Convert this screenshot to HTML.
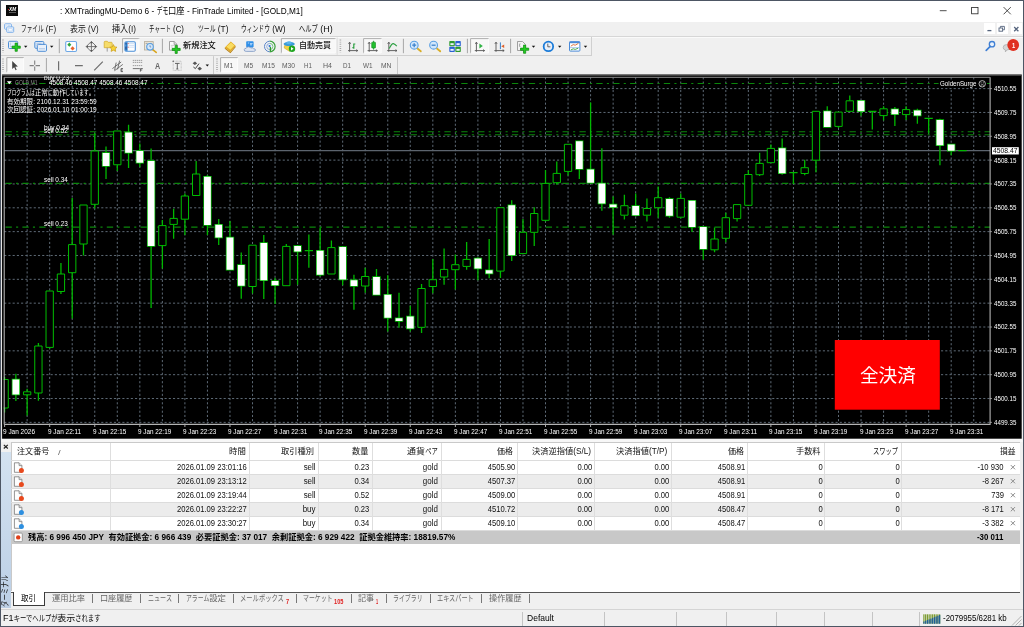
<!DOCTYPE html>
<html lang="ja"><head><meta charset="utf-8"><title>MT4</title>
<style>
html,body{margin:0;padding:0;background:#fff;overflow:hidden}
#w{position:relative;width:1024px;height:627px;overflow:hidden;background:#f0f0f0;font-family:'Liberation Sans','Noto Sans CJK JP',sans-serif;will-change:transform;}
#w div,#w span,#w svg{position:absolute;display:block}

#w span{white-space:pre;transform-origin:0 50%;}
#w span i{display:inline-block;font-style:normal;transform-origin:0 50%;}
</style></head>
<body><div id="w">
<div style="left:0px;top:0px;width:1024px;height:22px;background:#fff;"></div>
<div style="left:6px;top:5px;width:11.5px;height:11px;background:#0b0b0b;"></div>
<div style="left:8.6px;top:12.3px;width:7px;height:0.7px;background:#5a5a5a;"></div>
<div style="left:7.8px;top:9.3px;width:1px;height:1.2px;background:#d02020;"></div>
<svg style="left:930px;top:0" width="94" height="22" viewBox="0 0 94 22"><g stroke="#222" stroke-width="0.8" fill="none"><path d="M9.8 10.7H16.6"/><rect x="41.6" y="7.4" width="6.4" height="6.4"/><path d="M73.6 7.1L80.8 14.3M80.8 7.1L73.6 14.3"/></g></svg>
<div style="left:0px;top:22px;width:1024px;height:14.5px;background:#f0f0f0;"></div>
<svg style="left:4px;top:23px" width="12" height="12" viewBox="0 0 12 12"><rect x="0.6" y="0.8" width="6.8" height="5.4" rx="0.8" fill="#f4f8fd" stroke="#7eb0ea" stroke-width="1"/><path d="M1.6 2.6h1M1.6 4h1M3.6 2.4h2.6" stroke="#a9c8ee" stroke-width="0.7"/><rect x="2.7" y="3.9" width="7" height="5.4" rx="0.8" fill="#f4f8fd" stroke="#7eb0ea" stroke-width="1"/><rect x="4.2" y="5.8" width="4" height="2.2" fill="#fff" stroke="#a9c8ee" stroke-width="0.6"/></svg>
<div style="left:984px;top:23.4px;width:11px;height:10.4px;background:#fff;"></div>
<div style="left:996.5px;top:23.4px;width:11px;height:10.4px;background:#fff;"></div>
<div style="left:1010.8px;top:23.4px;width:11px;height:10.4px;background:#fff;"></div>
<svg style="left:984px;top:23px" width="38" height="11" viewBox="0 0 38 11"><g stroke="#55647d" fill="none"><path d="M3.4 7.6H7.4" stroke-width="1.3"/><rect x="15" y="5" width="3.6" height="3.2" stroke-width="0.9"/><path d="M16.4 4.8V3.4H20.4V6.8H19" stroke-width="0.9"/><path d="M30.2 4L34.4 8.2M34.4 4L30.2 8.2" stroke-width="1.3"/></g></svg>
<div style="left:0px;top:36.2px;width:1024px;height:0.8px;background:#d6d6d6;"></div>
<div style="left:0px;top:37px;width:1024px;height:0.8px;background:#fafafa;"></div>
<div style="left:591px;top:37px;width:0.8px;height:18.5px;background:#d0d0d0;"></div>
<div style="left:0px;top:55px;width:591.5px;height:0.8px;background:#d0d0d0;"></div>
<div style="left:397.3px;top:56.5px;width:0.8px;height:17.5px;background:#c8c8c8;"></div>
<svg style="left:0;top:36px" width="1024" height="40" viewBox="0 36 1024 40"><path d="M3 39.6V52.6" stroke="#a8a8a8" stroke-width="1.6" stroke-dasharray="0.9 1.2"/><rect x="8.5" y="41.3" width="9.2" height="7.2" rx="1" fill="#e3eefb" stroke="#4f8fd6" stroke-width="1"/><path d="M10 43.2h1M10 44.8h1M10 46.4h3" stroke="#9db9dc" stroke-width="0.7"/><path d="M15.1 43.1h2.2v2.9999999999999996h2.9999999999999996v2.2h-2.9999999999999996v2.9999999999999996h-2.2v-2.9999999999999996h-2.9999999999999996v-2.2h2.9999999999999996z" fill="#22cc22" stroke="#0c8a0c" stroke-width="0.7" stroke-linejoin="round"/><path d="M24 45.8h3.4l-1.7 2z" fill="#111"/><rect x="34.8" y="41.5" width="9" height="6.8" rx="1" fill="#dce9f8" stroke="#4f8fd6" stroke-width="1"/><rect x="37.3" y="44.4" width="9.2" height="6.9" rx="1" fill="#e8f0fa" stroke="#4f8fd6" stroke-width="1"/><path d="M36.4 43.4h5M36.4 45h2" stroke="#9db9dc" stroke-width="0.7"/><path d="M39 48.8h6" stroke="#9db9dc" stroke-width="0.8"/><path d="M50 45.8h3.4l-1.7 2z" fill="#111"/><path d="M59.3 38.8V53.2" stroke="#a6a6a6" stroke-width="1"/><rect x="65.7" y="41.5" width="10.8" height="10" rx="1.2" fill="#fdfeff" stroke="#6ea8e6" stroke-width="1.1"/><path d="M69.3 42.6l2 2.1-2 2.1-2-2.1z" fill="#2da43a"/><path d="M72.6 46.2l2.1 2.2-2.1 2.2-2.1-2.2z" fill="#e8622a"/><g stroke="#6a6a6a" fill="none" stroke-width="0.9"><path d="M91.4 41.4l5.2 5.2-5.2 5.2-5.2-5.2z"/><path d="M91.4 42.6v8M87.4 46.6h8"/></g><path d="M91.4 41.2l1.3 2h-2.6zM91.4 52l1.3-2h-2.6zM86 46.6l2-1.3v2.6zM96.8 46.6l-2-1.3v2.6z" fill="#555"/><path d="M104.2 42.2q0-0.9 0.9-0.9h2.2l0.9 1h3.2q0.8 0 0.8 0.8v4.6h-8z" fill="#f6dc6a" stroke="#d0a626" stroke-width="0.7"/><path d="M107.2 47.8v3.8" stroke="#777" stroke-width="0.7"/><path d="M113.4 44.6l1.1 2.3 2.5 0.3-1.8 1.7 0.5 2.5-2.3-1.2-2.3 1.2 0.5-2.5-1.8-1.7 2.5-0.3z" fill="#f7d43a" stroke="#c99a16" stroke-width="0.7" stroke-linejoin="round"/><rect x="122.2" y="38.2" width="17.200000000000003" height="15.0" fill="#f8f8f8"/><path d="M122.60000000000001 53.2V38.6H139.4" stroke="#9a9a9a" stroke-width="0.8" fill="none"/><path d="M122.60000000000001 52.900000000000006H139.0V38.6" stroke="#fdfdfd" stroke-width="0.8" fill="none"/><rect x="124.9" y="41.7" width="10.4" height="9.6" rx="1.2" fill="#fff" stroke="#4a8fd8" stroke-width="1.1"/><rect x="125.3" y="42.2" width="2.3" height="8.6" fill="#2f7fd0"/><path d="M128.4 43.6h6M128.4 45.4h6M128.4 47.2h6" stroke="#bcd3f0" stroke-width="0.7"/><path d="M127.7 43.6h0.9M127.7 47.2h0.9" stroke="#e03030" stroke-width="0.9"/><path d="M125.9 43.2v1.2M125.9 46.6v3" stroke="#13345e" stroke-width="0.8"/><rect x="144.4" y="41.6" width="8.8" height="8.4" fill="#ece6da" stroke="#b4aa98" stroke-width="0.8"/><path d="M145.6 43.4h2M150 43.4h2" stroke="#888" stroke-width="0.7"/><path d="M152.4 49.4l3.8 3" stroke="#d8a620" stroke-width="1.6" stroke-linecap="round"/><circle cx="150" cy="46.8" r="3.3" fill="#d6e8fa" stroke="#5a9ee0" stroke-width="1.1"/><path d="M150 45.2v1.8h1.2" stroke="#5a7fae" stroke-width="0.7" fill="none"/><path d="M162.4 38.8V53.2" stroke="#a6a6a6" stroke-width="1"/><path d="M169.5 41.5h4.6l2.9 2.9v5.8h-7.5z" fill="#fbfbfb" stroke="#8a8a8a" stroke-width="0.8"/><path d="M174.1 41.5v2.9h2.9" fill="#ddd" stroke="#8a8a8a" stroke-width="0.7"/><path d="M170.8 45.4h4M170.8 47h2" stroke="#bbb" stroke-width="0.7"/><path d="M175.14999999999998 45.4h2.1v2.95h2.95v2.1h-2.95v2.95h-2.1v-2.95h-2.95v-2.1h2.95z" fill="#22cc22" stroke="#0c8a0c" stroke-width="0.7" stroke-linejoin="round"/><path d="M224.8 47.6l6-6 4.8 4.2-5.2 6.2z" fill="#e4ac22"/><path d="M226.4 46.8l4.6-4.4 3.4 3-4 4.4z" fill="#f8dc62"/><path d="M224.8 47.6l5.6 4.4 5.2-6.2v1.4l-5.2 6-5.6-4.4z" fill="#b9831a"/><rect x="246.2" y="41.2" width="7.4" height="6.2" rx="0.8" fill="#2f8fe8"/><path d="M247.8 43h1.4M250 43.6h2.6M250 44.8h2" stroke="#e8f2ff" stroke-width="0.7"/><path d="M246.2 51.4q-2.2 0-2-1.7 0.2-1.5 2-1.4 0.6-1.6 2.4-1.5 1.6 0.1 2.2 1.3 1.6-0.9 2.6 0.5 2.2 0.1 2.1 1.5-0.1 1.3-2 1.3z" fill="#dfe6f2" stroke="#6f8cbc" stroke-width="0.7"/><circle cx="269.8" cy="46.5" r="5.3" fill="#eef1f5"/><path d="M269.8 41.2a5.3 5.3 0 0 0 0 10.6" fill="none" stroke="#5b86c9" stroke-width="1"/><path d="M269.8 41.2a5.3 5.3 0 0 1 0 10.6" fill="none" stroke="#39a039" stroke-width="1.2"/><path d="M269.8 43.4a3.1 3.1 0 0 0 0 6.2" fill="none" stroke="#7b9bd0" stroke-width="0.8"/><path d="M269.8 43.4a3.1 3.1 0 0 1 0 6.2" fill="none" stroke="#5fb65f" stroke-width="0.8"/><circle cx="269.6" cy="46" r="1.1" fill="#2f6fd0"/><path d="M270.4 47v4.4" stroke="#2c9a2c" stroke-width="1.3"/><rect x="281" y="38.2" width="54.60000000000002" height="15.0" fill="#f8f8f8"/><path d="M281.4 53.2V38.6H335.6" stroke="#9a9a9a" stroke-width="0.8" fill="none"/><path d="M281.4 52.900000000000006H335.20000000000005V38.6" stroke="#fdfdfd" stroke-width="0.8" fill="none"/><path d="M284.4 45.6h7.6l1.2 3-3.6 2.8-5.4-3.4z" fill="#f2d244" stroke="#c9a01c" stroke-width="0.5"/><ellipse cx="289.2" cy="43.9" rx="5.6" ry="2.1" fill="#3a9ad9"/><ellipse cx="289" cy="42.8" rx="2.8" ry="1.5" fill="#5ab4ea"/><circle cx="292" cy="48.8" r="3.2" fill="#1fa51f"/><path d="M291 47.1l2.6 1.7-2.6 1.7z" fill="#fff"/><path d="M337.2 37.4V55" stroke="#dadada" stroke-width="0.8"/><path d="M340.4 39.6V52.6" stroke="#a8a8a8" stroke-width="1.6" stroke-dasharray="0.9 1.2"/><path d="M349.6 42.4V51.8M348 50.6H357.6M348.5 43.8l1.1-1.6 1.1 1.6M356.3 49.7l1.5 0.9-1.5 0.9" stroke="#555" stroke-width="0.9" fill="none"/><path d="M353.8 43.4v5.4M353.8 47.6h-1.4M353.8 44h1.5" stroke="#2ea043" stroke-width="1.2"/><rect x="363.2" y="38.2" width="18.400000000000034" height="15.0" fill="#f8f8f8"/><path d="M363.59999999999997 53.2V38.6H381.6" stroke="#9a9a9a" stroke-width="0.8" fill="none"/><path d="M363.59999999999997 52.900000000000006H381.20000000000005V38.6" stroke="#fdfdfd" stroke-width="0.8" fill="none"/><path d="M369.20000000000005 42.4V51.8M367.6 50.6H377.20000000000005M368.1 43.8l1.1-1.6 1.1 1.6M375.90000000000003 49.7l1.5 0.9-1.5 0.9" stroke="#555" stroke-width="0.9" fill="none"/><path d="M373.6 40.8v8.8" stroke="#1e9a2e" stroke-width="0.9"/><rect x="371.7" y="42.2" width="3.8" height="5.8" rx="0.6" fill="#22c02e" stroke="#168a22" stroke-width="0.6"/><path d="M388.8 42.4V51.8M387.2 50.6H396.8M387.7 43.8l1.1-1.6 1.1 1.6M395.5 49.7l1.5 0.9-1.5 0.9" stroke="#555" stroke-width="0.9" fill="none"/><path d="M389.2 48.6q2.4-5.2 4.2-5 1.6 0.4 3.4 2.6" stroke="#2ea043" stroke-width="1.1" fill="none"/><path d="M403.4 38.8V53.2" stroke="#a6a6a6" stroke-width="1"/><path d="M417.2 48.2l3.6 3.1" stroke="#d9ae2a" stroke-width="1.8" stroke-linecap="round"/><circle cx="414.2" cy="45.2" r="3.9" fill="#d2e7fb" stroke="#5a9fe2" stroke-width="1.1"/><path d="M412.2 45.2h4M414.2 43.2v4" stroke="#3d82cc" stroke-width="1.3"/><path d="M436.6 48.2l3.6 3.1" stroke="#d9ae2a" stroke-width="1.8" stroke-linecap="round"/><circle cx="433.6" cy="45.2" r="3.9" fill="#d2e7fb" stroke="#5a9fe2" stroke-width="1.1"/><path d="M431.6 45.2h4" stroke="#3d82cc" stroke-width="1.3"/><rect x="449.3" y="41.1" width="5.5" height="5.2" rx="0.7" fill="#2e9a2e"/><rect x="450.40000000000003" y="43.2" width="3.3" height="1.9" fill="#eef3ff"/><rect x="455.3" y="41.1" width="5.5" height="5.2" rx="0.7" fill="#2a62d2"/><rect x="456.40000000000003" y="43.2" width="3.3" height="1.9" fill="#eef3ff"/><rect x="449.3" y="46.8" width="5.5" height="5.2" rx="0.7" fill="#2a62d2"/><rect x="450.40000000000003" y="48.9" width="3.3" height="1.9" fill="#eef3ff"/><rect x="455.3" y="46.8" width="5.5" height="5.2" rx="0.7" fill="#2e9a2e"/><rect x="456.40000000000003" y="48.9" width="3.3" height="1.9" fill="#eef3ff"/><path d="M467.4 38.8V53.2" stroke="#a6a6a6" stroke-width="1"/><rect x="470.2" y="38.2" width="18.600000000000023" height="15.0" fill="#f8f8f8"/><path d="M470.59999999999997 53.2V38.6H488.8" stroke="#9a9a9a" stroke-width="0.8" fill="none"/><path d="M470.59999999999997 52.900000000000006H488.40000000000003V38.6" stroke="#fdfdfd" stroke-width="0.8" fill="none"/><path d="M476.40000000000003 42.4V51.8M474.8 50.6H484.40000000000003M475.3 43.8l1.1-1.6 1.1 1.6M483.1 49.7l1.5 0.9-1.5 0.9" stroke="#555" stroke-width="0.9" fill="none"/><path d="M479.4 43.6l3.4 2.4-3.4 2.4z" fill="#2fb344"/><path d="M496.0 42.4V51.8M494.4 50.6H504.0M494.9 43.8l1.1-1.6 1.1 1.6M502.7 49.7l1.5 0.9-1.5 0.9" stroke="#555" stroke-width="0.9" fill="none"/><path d="M500.4 42.4v6.8" stroke="#3a7fc8" stroke-width="1"/><path d="M504.2 44.4v3.6l-3-1.8z" fill="#e0602a"/><path d="M510.6 38.8V53.2" stroke="#a6a6a6" stroke-width="1"/><path d="M517.5 41.5h5l3 3v6h-8z" fill="#f4f4f4" stroke="#8a8a8a" stroke-width="0.8"/><path d="M520 43.4q-1 1.8 0 3.6" stroke="#777" stroke-width="0.7" fill="none"/><path d="M523.5 45.1h2.2v2.9999999999999996h2.9999999999999996v2.2h-2.9999999999999996v2.9999999999999996h-2.2v-2.9999999999999996h-2.9999999999999996v-2.2h2.9999999999999996z" fill="#22cc22" stroke="#0c8a0c" stroke-width="0.7" stroke-linejoin="round"/><path d="M531.8 45.8h3.4l-1.7 2z" fill="#111"/><circle cx="548.4" cy="46.4" r="4.75" fill="#e8eff9" stroke="#1b7bd8" stroke-width="1.8"/><path d="M547.8 43.6v3.2h2.6" stroke="#444" stroke-width="0.8" fill="none"/><path d="M558 45.8h3.4l-1.7 2z" fill="#111"/><rect x="569.5" y="41.7" width="10.4" height="9.4" rx="0.8" fill="#fff" stroke="#4a8ad8" stroke-width="1"/><path d="M569.5 42.4h10.4" stroke="#4a8ad8" stroke-width="1.6"/><path d="M570 47.6h9.4" stroke="#8fb4e6" stroke-width="0.7"/><path d="M570.8 46.2l2.4-1.6 2 0.6 3.2-1.8" stroke="#d8682e" stroke-width="0.9" fill="none"/><path d="M570.8 50l2.4-1.2 2 0.6 3-1.2" stroke="#3aa040" stroke-width="0.9" fill="none"/><path d="M583.8 45.8h3.4l-1.7 2z" fill="#111"/><circle cx="992" cy="44.2" r="2.7" fill="#eaf2fc" stroke="#3f7fd4" stroke-width="1.3"/><path d="M990.2 46.4l-4 4" stroke="#3f7fd4" stroke-width="1.7" stroke-linecap="round"/><path d="M1003.2 47.4q0-2.8 3.4-2.8 3.6 0 3.6 2.8 0 2.6-3.4 2.7l-1.4 1.8v-1.9q-2.2-0.4-2.2-2.6z" fill="#d6d6d6" stroke="#a8a8a8" stroke-width="0.7"/><circle cx="1013.2" cy="45" r="5.9" fill="#e03020"/><path d="M3 58.6V71.6" stroke="#a8a8a8" stroke-width="1.6" stroke-dasharray="0.9 1.2"/><rect x="6.4" y="57.2" width="17.6" height="15.0" fill="#f8f8f8"/><path d="M6.800000000000001 72.2V57.6H24" stroke="#9a9a9a" stroke-width="0.8" fill="none"/><path d="M6.800000000000001 71.9H23.6V57.6" stroke="#fdfdfd" stroke-width="0.8" fill="none"/><path d="M12.2 60.9v8.2l2-1.9 1.4 3 1.1-0.5-1.4-2.9 2.6-0.2z" fill="#444"/><path d="M29.6 65.6h4.2M35.6 65.6h4.4M34.7 60.4v4.3M34.7 66.5v4.3" stroke="#808080" stroke-width="1.1"/><path d="M46.4 58V71.8" stroke="#a6a6a6" stroke-width="1"/><path d="M58.6 61.2v9.2M75 65.6h7.8M94.2 70.4l8.6-8.8" stroke="#6e6e6e" stroke-width="1.2"/><path d="M112.4 68.6l8.8-6.6M114.4 70.8l8.4-6.4M116.2 62.6l-1.6 7.6M119.6 60.6l-2 8.8" stroke="#666" stroke-width="0.9"/><path d="M121 68.6v3h2M121 68.6h2M121 70h1.6" stroke="#444" stroke-width="0.8" fill="none"/><path d="M132.8 68.6h7" stroke="#666" stroke-width="0.9"/><path d="M132.8 60.4h10M132.8 62.4h10M132.8 65.6h10" stroke="#888" stroke-width="0.8" stroke-dasharray="1.4 0.6"/><path d="M140.4 71.6v-3h2.4M140.4 70h1.8" stroke="#444" stroke-width="0.8" fill="none"/><rect x="173.2" y="61.2" width="8" height="9.2" fill="none" stroke="#999" stroke-width="0.6" stroke-dasharray="0.8 0.6"/><circle cx="173.2" cy="61.2" r="0.8" fill="#666"/><path d="M175 63.4h4.6M177.3 63.4v5.6M176.3 69h2" stroke="#555" stroke-width="0.9"/><path d="M192.6 63.2l2.4-1.8 2.2 2-2.4 1.6zM197.4 68.6l2.4-1.8 2.2 2-2.4 1.6z" fill="#555"/><path d="M193.4 67l2 1.6 3.6-5" stroke="#444" stroke-width="1" fill="none"/><path d="M205.6 64.6h3.4l-1.7 2z" fill="#111"/><path d="M213.5 56.2V74" stroke="#c4c4c4" stroke-width="0.9"/><path d="M217 58.6V71.6" stroke="#a8a8a8" stroke-width="1.6" stroke-dasharray="0.9 1.2"/><rect x="220.2" y="57.2" width="17.80000000000001" height="15.0" fill="#f8f8f8"/><path d="M220.6 72.2V57.6H238" stroke="#9a9a9a" stroke-width="0.8" fill="none"/><path d="M220.6 71.9H237.6V57.6" stroke="#fdfdfd" stroke-width="0.8" fill="none"/></svg>
<svg style="left:0;top:74px" width="1024" height="366" viewBox="0 74 1024 366"><rect x="2.05" y="74.6" width="1019.6500000000001" height="364.1" fill="#000"/><rect x="2.05" y="74.6" width="1019.6500000000001" height="1.2" fill="#505050"/><path d="M27.14 77.3V424.4M49.68 77.3V424.4M72.21 77.3V424.4M94.75 77.3V424.4M117.29 77.3V424.4M139.83 77.3V424.4M162.37 77.3V424.4M184.90 77.3V424.4M207.44 77.3V424.4M229.98 77.3V424.4M252.52 77.3V424.4M275.06 77.3V424.4M297.59 77.3V424.4M320.13 77.3V424.4M342.67 77.3V424.4M365.21 77.3V424.4M387.75 77.3V424.4M410.28 77.3V424.4M432.82 77.3V424.4M455.36 77.3V424.4M477.90 77.3V424.4M500.44 77.3V424.4M522.97 77.3V424.4M545.51 77.3V424.4M568.05 77.3V424.4M590.59 77.3V424.4M613.13 77.3V424.4M635.66 77.3V424.4M658.20 77.3V424.4M680.74 77.3V424.4M703.28 77.3V424.4M725.82 77.3V424.4M748.35 77.3V424.4M770.89 77.3V424.4M793.43 77.3V424.4M815.97 77.3V424.4M838.51 77.3V424.4M861.04 77.3V424.4M883.58 77.3V424.4M906.12 77.3V424.4M928.66 77.3V424.4M951.20 77.3V424.4M973.73 77.3V424.4M4.2 88.60H990.1M4.2 112.44H990.1M4.2 136.28H990.1M4.2 160.12H990.1M4.2 183.96H990.1M4.2 207.80H990.1M4.2 231.64H990.1M4.2 255.48H990.1M4.2 279.32H990.1M4.2 303.16H990.1M4.2 327.00H990.1M4.2 350.84H990.1M4.2 374.68H990.1M4.2 398.52H990.1M4.2 422.36H990.1" stroke="#5e6a76" stroke-width="1" stroke-dasharray="2.11 2.11" fill="none"/><path d="M4.2 83.53H990.1M4.2 131.81H990.1M4.2 134.79H990.1M4.2 183.36H990.1M4.2 227.17H990.1" stroke="#0b860b" stroke-width="1.1" stroke-dasharray="6.33 4.22 2.11 4.22" stroke-dashoffset="15.57" fill="none"/><path d="M4.2 150.58H990.1" stroke="#5c646e" stroke-width="1.2" fill="none"/><path d="M4.60 377.0V379.5M4.60 408.0V412.5M15.87 373.75V379.5M15.87 394.5V401.0M27.14 388.75V391.8M27.14 394.8V415.5M38.41 343.0V346.0M38.41 393.0V400.75M49.68 347.4V348.4M60.95 263.0V274.0M60.95 291.5V294.0M72.21 198.0V244.6M72.21 272.7V318.5M83.48 244.0V255.6M94.75 133.0V151.0M94.75 204.3V208.5M106.02 146.5V153.0M106.02 166.0V179.0M117.29 164.75V171.0M128.56 124.75V132.5M128.56 152.75V168.0M139.83 143.5V151.0M139.83 162.75V167.0M151.10 148.5V161.0M151.10 245.9V308.0M162.37 220.0V225.6M162.37 245.6V268.4M173.63 208.8V218.4M173.63 224.4V238.8M184.90 193.5V196.0M184.90 219.2V235.0M196.17 161.0V174.0M196.17 195.5V196.0M207.44 175.0V176.75M207.44 225.0V235.0M218.71 218.9V224.7M218.71 237.6V245.0M229.98 220.9V237.6M241.25 252.6V264.9M241.25 285.8V298.7M252.52 286.5V293.6M263.79 235.1V243.1M263.79 280.2V299.0M275.06 277.7V281.0M275.06 285.2V304.0M286.33 243.9V246.4M297.59 245.0V245.9M297.59 251.4V284.7M308.86 234.6V250.7M308.86 250.7V267.7M304.71 250.7H313.01M320.13 227.6V250.7M320.13 274.7V276.5M331.40 240.6V247.6M342.67 246.4V247.1M342.67 279.5V285.2M353.94 274.7V280.2M353.94 286.0V309.8M365.21 267.7V276.5M365.21 286.0V292.8M376.48 269.0V277.0M387.75 275.2V294.8M387.75 317.8V331.6M399.02 292.8V318.3M399.02 321.1V327.8M410.28 305.8V316.6M410.28 328.6V331.6M421.55 284.0V288.5M421.55 327.3V332.9M432.82 258.9V279.7M432.82 286.5V293.3M444.09 248.4V269.4M444.09 277.0V284.7M455.36 254.4V264.7M455.36 269.7V289.5M466.63 242.1V259.4M466.63 266.4V269.7M477.90 257.2V258.4M477.90 268.4V280.2M489.17 238.9V270.2M489.17 273.5V278.2M500.44 271.1V278.0M511.71 200.2V205.2M511.71 255.3V260.9M522.97 219.0V232.3M534.24 207.2V213.5M534.24 232.3V246.1M545.51 170.1V183.4M545.51 220.3V221.5M556.78 161.4V173.4M556.78 182.7V184.7M568.05 171.4V175.6M579.32 168.9V178.9M590.59 102.6V169.4M601.86 148.3V183.4M601.86 203.5V210.7M613.13 196.4V204.5M613.13 207.2V234.8M624.39 194.7V205.7M624.39 215.2V219.5M635.66 193.4V206.0M635.66 215.2V216.5M646.93 198.4V208.5M646.93 215.2V221.5M658.20 186.4V197.7M658.20 207.7V217.7M669.47 197.2V198.9M669.47 215.7V217.7M680.74 193.4V198.4M680.74 217.2V218.5M692.01 227.0V232.0M703.28 249.1V259.8M714.55 227.6V239.0M714.55 249.8V252.3M725.82 212.7V217.7M725.82 238.3V242.3M737.09 218.6V221.6M748.35 170.2V174.5M759.62 152.7V163.4M759.62 174.7V176.0M770.89 144.6V148.4M782.16 138.4V148.2M782.16 173.2V174.7M793.43 172.7V184.0M789.28 172.7H797.58M804.70 159.7V167.7M804.70 173.5V175.2M815.97 160.2V172.2M827.24 106.3V111.3M838.51 126.4V128.1M849.77 95.5V100.8M861.04 100.0V100.8M861.04 111.3V115.8M872.31 111.3V129.6M868.16 111.3H876.46M883.58 106.3V108.8M883.58 115.6V120.6M894.85 107.0V109.3M894.85 114.3V125.9M906.12 106.3V109.6M906.12 114.6V120.1M917.39 108.8V110.6M917.39 115.6V123.8M928.66 118.3V133.4M924.51 118.3H932.81M939.93 118.8V120.1M939.93 145.2V165.2M951.20 150.7V155.2M958.32 150.6H966.62" stroke="#00b800" stroke-width="1.3" fill="none"/><path d="M0.95 379.50H8.25V408.00H0.95ZM23.49 391.80H30.79V394.80H23.49ZM34.76 346.00H42.06V393.00H34.76ZM46.03 291.00H53.33V347.40H46.03ZM57.30 274.00H64.59V291.50H57.30ZM68.56 244.60H75.86V272.70H68.56ZM79.83 205.00H87.13V244.00H79.83ZM91.10 151.00H98.40V204.30H91.10ZM113.64 131.00H120.94V164.75H113.64ZM158.72 225.60H166.02V245.60H158.72ZM169.98 218.40H177.28V224.40H169.98ZM181.25 196.00H188.55V219.20H181.25ZM192.52 174.00H199.82V195.50H192.52ZM248.87 245.20H256.17V286.50H248.87ZM282.68 246.40H289.98V285.70H282.68ZM327.75 247.60H335.05V274.00H327.75ZM361.56 276.50H368.86V286.00H361.56ZM417.90 288.50H425.20V327.30H417.90ZM429.17 279.70H436.47V286.50H429.17ZM440.44 269.40H447.74V277.00H440.44ZM451.71 264.70H459.01V269.70H451.71ZM462.98 259.40H470.28V266.40H462.98ZM496.79 207.70H504.09V271.10H496.79ZM519.32 232.30H526.62V253.60H519.32ZM530.59 213.50H537.89V232.30H530.59ZM541.86 183.40H549.16V220.30H541.86ZM553.13 173.40H560.43V182.70H553.13ZM564.40 144.30H571.70V171.40H564.40ZM620.75 205.70H628.04V215.20H620.75ZM643.28 208.50H650.58V215.20H643.28ZM654.55 197.70H661.85V207.70H654.55ZM677.09 198.40H684.39V217.20H677.09ZM710.90 239.00H718.20V249.80H710.90ZM722.17 217.70H729.47V238.30H722.17ZM733.44 204.60H740.74V218.60H733.44ZM744.70 174.50H752.00V205.30H744.70ZM755.97 163.40H763.27V174.70H755.97ZM767.24 148.40H774.54V162.70H767.24ZM801.05 167.70H808.35V173.50H801.05ZM812.32 111.30H819.62V160.20H812.32ZM834.86 112.10H842.16V126.40H834.86ZM846.12 100.80H853.42V111.30H846.12ZM879.93 108.80H887.23V115.60H879.93ZM902.47 109.60H909.77V114.60H902.47Z" stroke="#00be00" stroke-width="1" fill="#000"/><path d="M12.47 379.50H19.27V394.50H12.47ZM102.62 153.00H109.42V166.00H102.62ZM125.16 132.50H131.96V152.75H125.16ZM136.43 151.00H143.23V162.75H136.43ZM147.70 161.00H154.50V245.90H147.70ZM204.04 176.75H210.84V225.00H204.04ZM215.31 224.70H222.11V237.60H215.31ZM226.58 237.60H233.38V269.70H226.58ZM237.85 264.90H244.65V285.80H237.85ZM260.39 243.10H267.19V280.20H260.39ZM271.66 281.00H278.46V285.20H271.66ZM294.19 245.90H300.99V251.40H294.19ZM316.73 250.70H323.53V274.70H316.73ZM339.27 247.10H346.07V279.50H339.27ZM350.54 280.20H357.34V286.00H350.54ZM373.08 277.00H379.88V294.80H373.08ZM384.35 294.80H391.15V317.80H384.35ZM395.62 318.30H402.42V321.10H395.62ZM406.88 316.60H413.68V328.60H406.88ZM474.50 258.40H481.30V268.40H474.50ZM485.77 270.20H492.57V273.50H485.77ZM508.31 205.20H515.11V255.30H508.31ZM575.92 141.30H582.72V168.90H575.92ZM587.19 169.40H593.99V182.70H587.19ZM598.46 183.40H605.26V203.50H598.46ZM609.73 204.50H616.53V207.20H609.73ZM632.26 206.00H639.06V215.20H632.26ZM666.07 198.90H672.87V215.70H666.07ZM688.61 200.70H695.41V227.00H688.61ZM699.88 227.00H706.68V249.10H699.88ZM778.76 148.20H785.56V173.20H778.76ZM823.84 111.30H830.64V127.10H823.84ZM857.64 100.80H864.44V111.30H857.64ZM891.45 109.30H898.25V114.30H891.45ZM913.99 110.60H920.79V115.60H913.99ZM936.53 120.10H943.33V145.20H936.53ZM947.80 144.40H954.60V150.70H947.80Z" stroke="#00be00" stroke-width="1.5" fill="#fff" style="paint-order:stroke"/><rect x="2.05" y="77.3" width="1.6000000000000003" height="347.09999999999997" fill="#000"/><rect x="0" y="74.6" width="2.05" height="364.1" fill="#e4e4e4"/><path d="M4.2 424.4V77.3M990.1 77.3V424.4H4.2" stroke="#b4b4b4" stroke-width="1.1" fill="none"/><path d="M4.2 77.3H990.1" stroke="#8e8e8e" stroke-width="1" fill="none"/><path d="M990.1 88.60h1.7M990.1 112.44h1.7M990.1 136.28h1.7M990.1 160.12h1.7M990.1 183.96h1.7M990.1 207.80h1.7M990.1 231.64h1.7M990.1 255.48h1.7M990.1 279.32h1.7M990.1 303.16h1.7M990.1 327.00h1.7M990.1 350.84h1.7M990.1 374.68h1.7M990.1 398.52h1.7M990.1 422.36h1.7M4.60 424.4v2.6M49.68 424.4v2.6M94.75 424.4v2.6M139.83 424.4v2.6M184.90 424.4v2.6M229.98 424.4v2.6M275.06 424.4v2.6M320.13 424.4v2.6M365.21 424.4v2.6M410.28 424.4v2.6M455.36 424.4v2.6M500.44 424.4v2.6M545.51 424.4v2.6M590.59 424.4v2.6M635.66 424.4v2.6M680.74 424.4v2.6M725.82 424.4v2.6M770.89 424.4v2.6M815.97 424.4v2.6M861.04 424.4v2.6M906.12 424.4v2.6M951.20 424.4v2.6" stroke="#a9a9a9" stroke-width="1" fill="none"/><rect x="992" y="147.18" width="26.8" height="7.3" fill="#fff"/><rect x="938.6" y="80" width="48.4" height="8" fill="#000"/><rect x="834.8" y="340" width="105" height="69.7" fill="#ff0000"/><g transform="translate(982.2 83.8)" stroke="#ddd" stroke-width="0.8" fill="none"><circle r="3.2"/><path d="M-1.6 1.5Q0 0.2 1.6 1.5"/><path d="M-1.6 -0.9h1M0.6 -0.9h1"/></g><path d="M6.9 81.3h4.8l-2.4 3z" fill="#fff"/></svg>
<div style="left:1.3px;top:452.4px;width:9.4px;height:155.2px;background:linear-gradient(#d3e2f1,#bccfe5);"></div>
<svg style="left:3px;top:444px" width="7" height="7"><g transform="translate(0 0)"><path d="M0.8 0.9L4.8 4.5M4.8 0.9L0.8 4.5" stroke="#222" stroke-width="1.2"/></g></svg>
<div style="left:1.2px;top:438.7px;width:1021.6px;height:3.6px;background:#f7f7f7;"></div>
<div style="left:11.3px;top:442.6px;width:1009.0px;height:149px;background:#fff;"></div>
<div style="left:11.3px;top:442.4px;width:1009.0px;height:0.8px;background:#c9c9c9;"></div>
<div style="left:10.9px;top:442.4px;width:0.8px;height:149px;background:#c9c9c9;"></div>
<div style="left:11.700000000000001px;top:474.4px;width:1008.6px;height:14px;background:#ececec;"></div>
<div style="left:11.700000000000001px;top:502.4px;width:1008.6px;height:14px;background:#ececec;"></div>
<div style="left:11.700000000000001px;top:530.4px;width:1008.6px;height:14px;background:#c8c8c8;"></div>
<div style="left:11.3px;top:460.0px;width:1009.0px;height:0.8px;background:#dcdcdc;"></div>
<div style="left:11.3px;top:474.0px;width:1009.0px;height:0.8px;background:#dcdcdc;"></div>
<div style="left:11.3px;top:488.0px;width:1009.0px;height:0.8px;background:#dcdcdc;"></div>
<div style="left:11.3px;top:502.0px;width:1009.0px;height:0.8px;background:#dcdcdc;"></div>
<div style="left:11.3px;top:516.0px;width:1009.0px;height:0.8px;background:#dcdcdc;"></div>
<div style="left:11.3px;top:530.0px;width:1009.0px;height:0.8px;background:#dcdcdc;"></div>
<div style="left:110.3px;top:443px;width:0.8px;height:87.39999999999998px;background:#dedede;"></div>
<div style="left:249.1px;top:443px;width:0.8px;height:87.39999999999998px;background:#dedede;"></div>
<div style="left:317.85px;top:443px;width:0.8px;height:87.39999999999998px;background:#dedede;"></div>
<div style="left:371.6px;top:443px;width:0.8px;height:87.39999999999998px;background:#dedede;"></div>
<div style="left:440.85px;top:443px;width:0.8px;height:87.39999999999998px;background:#dedede;"></div>
<div style="left:517.35px;top:443px;width:0.8px;height:87.39999999999998px;background:#dedede;"></div>
<div style="left:593.85px;top:443px;width:0.8px;height:87.39999999999998px;background:#dedede;"></div>
<div style="left:670.6px;top:443px;width:0.8px;height:87.39999999999998px;background:#dedede;"></div>
<div style="left:747.35px;top:443px;width:0.8px;height:87.39999999999998px;background:#dedede;"></div>
<div style="left:824.35px;top:443px;width:0.8px;height:87.39999999999998px;background:#dedede;"></div>
<div style="left:900.85px;top:443px;width:0.8px;height:87.39999999999998px;background:#dedede;"></div>
<svg style="left:1010px;top:464px" width="7" height="7"><g transform="translate(0 0.3)"><path d="M0.8 0.8L5 5M5 0.8L0.8 5" stroke="#8a8a8a" stroke-width="1"/></g></svg>
<svg style="left:13px;top:462px" width="13" height="13"><g transform="translate(0.5 0.0)"><path d="M0.9 0.8H5.6L8.4 3.6V10.3H0.9Z" fill="#fdfdfd" stroke="#777" stroke-width="0.8"/><path d="M5.6 0.8V3.6H8.4" fill="#ddd" stroke="#777" stroke-width="0.7"/><circle cx="7.9" cy="8.6" r="2.5" fill="#e8491d"/></g></svg>
<svg style="left:1010px;top:478px" width="7" height="7"><g transform="translate(0 0.3)"><path d="M0.8 0.8L5 5M5 0.8L0.8 5" stroke="#8a8a8a" stroke-width="1"/></g></svg>
<svg style="left:13px;top:476px" width="13" height="13"><g transform="translate(0.5 0.0)"><path d="M0.9 0.8H5.6L8.4 3.6V10.3H0.9Z" fill="#fdfdfd" stroke="#777" stroke-width="0.8"/><path d="M5.6 0.8V3.6H8.4" fill="#ddd" stroke="#777" stroke-width="0.7"/><circle cx="7.9" cy="8.6" r="2.5" fill="#e8491d"/></g></svg>
<svg style="left:1010px;top:492px" width="7" height="7"><g transform="translate(0 0.3)"><path d="M0.8 0.8L5 5M5 0.8L0.8 5" stroke="#8a8a8a" stroke-width="1"/></g></svg>
<svg style="left:13px;top:490px" width="13" height="13"><g transform="translate(0.5 0.0)"><path d="M0.9 0.8H5.6L8.4 3.6V10.3H0.9Z" fill="#fdfdfd" stroke="#777" stroke-width="0.8"/><path d="M5.6 0.8V3.6H8.4" fill="#ddd" stroke="#777" stroke-width="0.7"/><circle cx="7.9" cy="8.6" r="2.5" fill="#e8491d"/></g></svg>
<svg style="left:1010px;top:506px" width="7" height="7"><g transform="translate(0 0.3)"><path d="M0.8 0.8L5 5M5 0.8L0.8 5" stroke="#8a8a8a" stroke-width="1"/></g></svg>
<svg style="left:13px;top:504px" width="13" height="13"><g transform="translate(0.5 0.0)"><path d="M0.9 0.8H5.6L8.4 3.6V10.3H0.9Z" fill="#fdfdfd" stroke="#777" stroke-width="0.8"/><path d="M5.6 0.8V3.6H8.4" fill="#ddd" stroke="#777" stroke-width="0.7"/><circle cx="7.9" cy="8.6" r="2.5" fill="#2d8fe0"/></g></svg>
<svg style="left:1010px;top:520px" width="7" height="7"><g transform="translate(0 0.3)"><path d="M0.8 0.8L5 5M5 0.8L0.8 5" stroke="#8a8a8a" stroke-width="1"/></g></svg>
<svg style="left:13px;top:518px" width="13" height="13"><g transform="translate(0.5 0.0)"><path d="M0.9 0.8H5.6L8.4 3.6V10.3H0.9Z" fill="#fdfdfd" stroke="#777" stroke-width="0.8"/><path d="M5.6 0.8V3.6H8.4" fill="#ddd" stroke="#777" stroke-width="0.7"/><circle cx="7.9" cy="8.6" r="2.5" fill="#2d8fe0"/></g></svg>
<svg style="left:13px;top:532px" width="11" height="11"><g transform="translate(0.6 0.6)"><rect x="0.5" y="0.5" width="8.2" height="8.6" rx="1" fill="#fff" stroke="#888" stroke-width="0.8"/><circle cx="4.6" cy="4.8" r="2.2" fill="#e0401a"/></g></svg>
<div style="left:10.9px;top:591.6px;width:1009.6px;height:1px;background:#555;"></div>
<div style="left:13px;top:591.6px;width:31.6px;height:14.2px;background:#fff;border:1.2px solid #3a3a3a;border-top:none;box-sizing:border-box;"></div>
<div style="left:92.1px;top:594.3px;width:0.9px;height:9px;background:#777;"></div>
<div style="left:140.1px;top:594.3px;width:0.9px;height:9px;background:#777;"></div>
<div style="left:177.9px;top:594.3px;width:0.9px;height:9px;background:#777;"></div>
<div style="left:232.79999999999998px;top:594.3px;width:0.9px;height:9px;background:#777;"></div>
<div style="left:295.8px;top:594.3px;width:0.9px;height:9px;background:#777;"></div>
<div style="left:350.8px;top:594.3px;width:0.9px;height:9px;background:#777;"></div>
<div style="left:385.8px;top:594.3px;width:0.9px;height:9px;background:#777;"></div>
<div style="left:429.6px;top:594.3px;width:0.9px;height:9px;background:#777;"></div>
<div style="left:480.8px;top:594.3px;width:0.9px;height:9px;background:#777;"></div>
<div style="left:528.8000000000001px;top:594.3px;width:0.9px;height:9px;background:#777;"></div>
<span style="left:1.3px;top:606.6px;font-size:8.6px;line-height:9.6px;color:#1c1c1c;transform-origin:0 0;transform:rotate(-90deg) scaleX(0.745)">ターミナル</span>
<div style="left:0px;top:609px;width:1024px;height:0.8px;background:#d4d4d4;"></div>
<div style="left:522.1px;top:611.5px;width:0.8px;height:14.5px;background:#c4c4c4;"></div>
<div style="left:603.8000000000001px;top:611.5px;width:0.8px;height:14.5px;background:#c4c4c4;"></div>
<div style="left:676.3000000000001px;top:611.5px;width:0.8px;height:14.5px;background:#c4c4c4;"></div>
<div style="left:725.8000000000001px;top:611.5px;width:0.8px;height:14.5px;background:#c4c4c4;"></div>
<div style="left:775.8000000000001px;top:611.5px;width:0.8px;height:14.5px;background:#c4c4c4;"></div>
<div style="left:823.8000000000001px;top:611.5px;width:0.8px;height:14.5px;background:#c4c4c4;"></div>
<div style="left:872.1px;top:611.5px;width:0.8px;height:14.5px;background:#c4c4c4;"></div>
<div style="left:918.8000000000001px;top:611.5px;width:0.8px;height:14.5px;background:#c4c4c4;"></div>
<svg style="left:923px;top:614px" width="19" height="11"><g transform="translate(0 0.3)"><rect x="0.30" y="0" width="1.2" height="9.4" fill="#7a9a2e"/><rect x="0.30" y="7.20" width="1.2" height="2.20" fill="#1f5f9c"/><rect x="2.05" y="0" width="1.2" height="9.4" fill="#7a9a2e"/><rect x="2.05" y="6.48" width="1.2" height="2.92" fill="#1f5f9c"/><rect x="3.80" y="0" width="1.2" height="9.4" fill="#7a9a2e"/><rect x="3.80" y="5.76" width="1.2" height="3.64" fill="#1f5f9c"/><rect x="5.55" y="0" width="1.2" height="9.4" fill="#7a9a2e"/><rect x="5.55" y="5.04" width="1.2" height="4.36" fill="#1f5f9c"/><rect x="7.30" y="0" width="1.2" height="9.4" fill="#7a9a2e"/><rect x="7.30" y="4.32" width="1.2" height="5.08" fill="#1f5f9c"/><rect x="9.05" y="0" width="1.2" height="9.4" fill="#7a9a2e"/><rect x="9.05" y="3.60" width="1.2" height="5.80" fill="#1f5f9c"/><rect x="10.80" y="0" width="1.2" height="9.4" fill="#7a9a2e"/><rect x="10.80" y="2.88" width="1.2" height="6.52" fill="#1f5f9c"/><rect x="12.55" y="0" width="1.2" height="9.4" fill="#7a9a2e"/><rect x="12.55" y="2.16" width="1.2" height="7.24" fill="#1f5f9c"/><rect x="14.30" y="0" width="1.2" height="9.4" fill="#7a9a2e"/><rect x="14.30" y="1.44" width="1.2" height="7.96" fill="#1f5f9c"/><rect x="16.05" y="0" width="1.2" height="9.4" fill="#7a9a2e"/><rect x="16.05" y="0.72" width="1.2" height="8.68" fill="#1f5f9c"/></g></svg>
<svg style="left:1011px;top:615px" width="11" height="11" viewBox="0 0 11 11"><path d="M10.5 1L1 10.5M10.5 4.5L4.5 10.5M10.5 8L8 10.5" stroke="#aaa" stroke-width="0.9"/></svg>
<div style="left:0px;top:0px;width:1024px;height:1px;background:#4d5664;"></div>
<div style="left:0px;top:0px;width:1.2px;height:627px;background:#4d5664;"></div>
<div style="left:1022.8px;top:0px;width:1.2px;height:627px;background:#4d5664;"></div>
<div style="left:0px;top:626px;width:1024px;height:1px;background:#4d5664;"></div>
<span style="font-size:5.4px;color:#fff;line-height:7.56px;top:6.12px;font-weight:700;left:8.8px;transform:scaleX(0.8772);font-style:italic;">XM</span>
<span style="font-size:8.8px;color:#000;line-height:12.32px;top:5.14px;left:59.8px;transform:scaleX(0.9387);">: XMTradingMU-Demo 6 - <i style="transform:scaleX(0.7);margin-right:-5.28px">デモ</i>口座 - FinTrade Limited - [GOLD,M1]</span>
<span style="font-size:8.6px;color:#111;line-height:12.04px;top:22.88px;left:21.1px;transform:scaleX(0.9372);"><i style="transform:scaleX(0.7);margin-right:-10.32px">ファイル</i> (F)</span>
<span style="font-size:8.6px;color:#111;line-height:12.04px;top:22.88px;left:69.5px;transform:scaleX(0.9217);">表示 (V)</span>
<span style="font-size:8.6px;color:#111;line-height:12.04px;top:22.88px;left:111.7px;transform:scaleX(0.9442);">挿入(I)</span>
<span style="font-size:8.6px;color:#111;line-height:12.04px;top:22.88px;left:148.7px;transform:scaleX(0.9135);"><i style="transform:scaleX(0.7);margin-right:-10.32px">チャート</i> (C)</span>
<span style="font-size:8.6px;color:#111;line-height:12.04px;top:22.88px;left:197.5px;transform:scaleX(0.9702);"><i style="transform:scaleX(0.7);margin-right:-7.74px">ツール</i> (T)</span>
<span style="font-size:8.6px;color:#111;line-height:12.04px;top:22.88px;left:240.9px;transform:scaleX(0.9627);"><i style="transform:scaleX(0.7);margin-right:-12.9px">ウィンドウ</i> (W)</span>
<span style="font-size:8.6px;color:#111;line-height:12.04px;top:22.88px;left:299px;transform:scaleX(1.0435);"><i style="transform:scaleX(0.7);margin-right:-7.74px">ヘルプ</i> (H)</span>
<span style="font-size:8.4px;color:#111;line-height:11.76px;top:40.12px;font-weight:500;left:182.8px;transform:scaleX(0.9791);">新規注文</span>
<span style="font-size:8.4px;color:#111;line-height:11.76px;top:40.22px;font-weight:500;left:298.8px;transform:scaleX(0.9552);">自動売買</span>
<span style="font-size:8.6px;color:#666;line-height:12.04px;top:59.78px;font-weight:700;left:154.8px;transform:scaleX(0.8362);">A</span>
<span style="font-size:8px;color:#fff;line-height:11.2px;top:39.5px;font-weight:700;left:1011.6px;transform:scaleX(0.7186);">1</span>
<span style="font-size:8px;color:#5c5c5c;line-height:11.2px;top:60.1px;left:224px;transform:scaleX(0.8270);">M1</span>
<span style="font-size:8px;color:#5c5c5c;line-height:11.2px;top:60.1px;left:243.8px;transform:scaleX(0.8270);">M5</span>
<span style="font-size:8px;color:#5c5c5c;line-height:11.2px;top:60.1px;left:262.2px;transform:scaleX(0.8225);">M15</span>
<span style="font-size:8px;color:#5c5c5c;line-height:11.2px;top:60.1px;left:281.8px;transform:scaleX(0.8353);">M30</span>
<span style="font-size:8px;color:#5c5c5c;line-height:11.2px;top:60.1px;left:303.8px;transform:scaleX(0.7621);">H1</span>
<span style="font-size:8px;color:#5c5c5c;line-height:11.2px;top:60.1px;left:322.8px;transform:scaleX(0.8794);">H4</span>
<span style="font-size:8px;color:#5c5c5c;line-height:11.2px;top:60.1px;left:343.2px;transform:scaleX(0.7817);">D1</span>
<span style="font-size:8px;color:#5c5c5c;line-height:11.2px;top:60.1px;left:362.8px;transform:scaleX(0.8000);">W1</span>
<span style="font-size:8px;color:#5c5c5c;line-height:11.2px;top:60.1px;left:381.2px;transform:scaleX(0.8351);">MN</span>
<span style="font-size:6.6px;color:#fff;line-height:9.24px;top:83.98px;left:994px;transform:scaleX(0.9394);">4510.55</span>
<span style="font-size:6.6px;color:#fff;line-height:9.24px;top:107.82px;left:994px;transform:scaleX(0.9394);">4509.75</span>
<span style="font-size:6.6px;color:#fff;line-height:9.24px;top:131.66px;left:994px;transform:scaleX(0.9394);">4508.95</span>
<span style="font-size:6.6px;color:#fff;line-height:9.24px;top:155.5px;left:994px;transform:scaleX(0.9394);">4508.15</span>
<span style="font-size:6.6px;color:#fff;line-height:9.24px;top:179.34px;left:994px;transform:scaleX(0.9394);">4507.35</span>
<span style="font-size:6.6px;color:#fff;line-height:9.24px;top:203.18px;left:994px;transform:scaleX(0.9394);">4506.55</span>
<span style="font-size:6.6px;color:#fff;line-height:9.24px;top:227.02px;left:994px;transform:scaleX(0.9394);">4505.75</span>
<span style="font-size:6.6px;color:#fff;line-height:9.24px;top:250.86px;left:994px;transform:scaleX(0.9394);">4504.95</span>
<span style="font-size:6.6px;color:#fff;line-height:9.24px;top:274.7px;left:994px;transform:scaleX(0.9394);">4504.15</span>
<span style="font-size:6.6px;color:#fff;line-height:9.24px;top:298.54px;left:994px;transform:scaleX(0.9394);">4503.35</span>
<span style="font-size:6.6px;color:#fff;line-height:9.24px;top:322.38px;left:994px;transform:scaleX(0.9394);">4502.55</span>
<span style="font-size:6.6px;color:#fff;line-height:9.24px;top:346.22px;left:994px;transform:scaleX(0.9394);">4501.75</span>
<span style="font-size:6.6px;color:#fff;line-height:9.24px;top:370.06px;left:994px;transform:scaleX(0.9394);">4500.95</span>
<span style="font-size:6.6px;color:#fff;line-height:9.24px;top:393.9px;left:994px;transform:scaleX(0.9394);">4500.15</span>
<span style="font-size:6.6px;color:#fff;line-height:9.24px;top:417.74px;left:994px;transform:scaleX(0.9394);">4499.35</span>
<span style="font-size:6.8px;color:#000;line-height:9.52px;top:146.12px;left:993.3px;transform:scaleX(0.9968);">4508.47</span>
<span style="font-size:6.6px;color:#fff;line-height:9.24px;top:427.18px;left:3.0999999999999996px;transform:scaleX(0.9804);">9 Jan 2026</span>
<span style="font-size:6.6px;color:#fff;line-height:9.24px;top:427.18px;left:48.176px;transform:scaleX(0.9769);">9 Jan 22:11</span>
<span style="font-size:6.6px;color:#fff;line-height:9.24px;top:427.18px;left:93.252px;transform:scaleX(0.9632);">9 Jan 22:15</span>
<span style="font-size:6.6px;color:#fff;line-height:9.24px;top:427.18px;left:138.328px;transform:scaleX(0.9632);">9 Jan 22:19</span>
<span style="font-size:6.6px;color:#fff;line-height:9.24px;top:427.18px;left:183.404px;transform:scaleX(0.9632);">9 Jan 22:23</span>
<span style="font-size:6.6px;color:#fff;line-height:9.24px;top:427.18px;left:228.48px;transform:scaleX(0.9632);">9 Jan 22:27</span>
<span style="font-size:6.6px;color:#fff;line-height:9.24px;top:427.18px;left:273.55600000000004px;transform:scaleX(0.9632);">9 Jan 22:31</span>
<span style="font-size:6.6px;color:#fff;line-height:9.24px;top:427.18px;left:318.632px;transform:scaleX(0.9632);">9 Jan 22:35</span>
<span style="font-size:6.6px;color:#fff;line-height:9.24px;top:427.18px;left:363.708px;transform:scaleX(0.9632);">9 Jan 22:39</span>
<span style="font-size:6.6px;color:#fff;line-height:9.24px;top:427.18px;left:408.78400000000005px;transform:scaleX(0.9632);">9 Jan 22:43</span>
<span style="font-size:6.6px;color:#fff;line-height:9.24px;top:427.18px;left:453.86px;transform:scaleX(0.9632);">9 Jan 22:47</span>
<span style="font-size:6.6px;color:#fff;line-height:9.24px;top:427.18px;left:498.93600000000004px;transform:scaleX(0.9632);">9 Jan 22:51</span>
<span style="font-size:6.6px;color:#fff;line-height:9.24px;top:427.18px;left:544.0120000000001px;transform:scaleX(0.9632);">9 Jan 22:55</span>
<span style="font-size:6.6px;color:#fff;line-height:9.24px;top:427.18px;left:589.0880000000001px;transform:scaleX(0.9632);">9 Jan 22:59</span>
<span style="font-size:6.6px;color:#fff;line-height:9.24px;top:427.18px;left:634.164px;transform:scaleX(0.9632);">9 Jan 23:03</span>
<span style="font-size:6.6px;color:#fff;line-height:9.24px;top:427.18px;left:679.24px;transform:scaleX(0.9632);">9 Jan 23:07</span>
<span style="font-size:6.6px;color:#fff;line-height:9.24px;top:427.18px;left:724.316px;transform:scaleX(0.9769);">9 Jan 23:11</span>
<span style="font-size:6.6px;color:#fff;line-height:9.24px;top:427.18px;left:769.392px;transform:scaleX(0.9632);">9 Jan 23:15</span>
<span style="font-size:6.6px;color:#fff;line-height:9.24px;top:427.18px;left:814.4680000000001px;transform:scaleX(0.9632);">9 Jan 23:19</span>
<span style="font-size:6.6px;color:#fff;line-height:9.24px;top:427.18px;left:859.544px;transform:scaleX(0.9632);">9 Jan 23:23</span>
<span style="font-size:6.6px;color:#fff;line-height:9.24px;top:427.18px;left:904.62px;transform:scaleX(0.9632);">9 Jan 23:27</span>
<span style="font-size:6.6px;color:#fff;line-height:9.24px;top:427.18px;left:949.696px;transform:scaleX(0.9632);">9 Jan 23:31</span>
<span style="font-size:6.6px;color:#fff;line-height:9.24px;top:72.71px;left:43.9px;transform:scaleX(0.9883);clip-path:inset(3.6px 0 0 0);">buy 0.23</span>
<span style="font-size:6.6px;color:#fff;line-height:9.24px;top:123.39px;left:43.9px;transform:scaleX(0.9883);">buy 0.34</span>
<span style="font-size:6.6px;color:#fff;line-height:9.24px;top:126.37px;left:43.9px;transform:scaleX(0.9690);">sell 0.52</span>
<span style="font-size:6.6px;color:#fff;line-height:9.24px;top:174.94px;left:43.9px;transform:scaleX(0.9690);">sell 0.34</span>
<span style="font-size:6.6px;color:#fff;line-height:9.24px;top:218.75px;left:43.9px;transform:scaleX(0.9690);">sell 0.23</span>
<span style="font-size:6.6px;color:#8a8a8a;line-height:9.24px;top:78.28px;left:15px;transform:scaleX(0.7613);">GOLD,M1</span>
<span style="font-size:6.6px;color:#fff;line-height:9.24px;top:78.28px;left:48.9px;transform:scaleX(0.9768);">4508.46 4508.47 4508.46 4508.47</span>
<span style="font-size:6.8px;color:#fff;line-height:9.52px;top:88.14px;left:6.8px;transform:scaleX(0.9748);"><i style="transform:scaleX(0.7);margin-right:-12.24px">プログラムは</i>正常<i style="transform:scaleX(0.7);margin-right:-2.04px">に</i>動作<i style="transform:scaleX(0.7);margin-right:-10.2px">しています</i>。</span>
<span style="font-size:6.8px;color:#fff;line-height:9.52px;top:96.64px;left:6.8px;transform:scaleX(0.9611);">有効期限: 2100.12.31 23:59:59</span>
<span style="font-size:6.8px;color:#fff;line-height:9.52px;top:104.74px;left:6.8px;transform:scaleX(0.9611);">次回認証: 2026.01.10 01:00:19</span>
<span style="font-size:6.6px;color:#fff;line-height:9.24px;top:79.28px;left:939.5px;transform:scaleX(0.9393);">GoldenSurge</span>
<span style="font-size:18.6px;color:#fff;line-height:26.04px;top:362.98px;left:859.6px;transform:scaleX(1.0001);">全決済</span>
<span style="font-size:8.4px;color:#111;line-height:11.76px;top:446.42px;left:16.8px;transform:scaleX(0.9672);">注文番号</span>
<span style="font-size:6.5px;color:#666;line-height:9.1px;top:448.15px;left:58.4px;transform:scaleX(1.4345);">/</span>
<span style="font-size:8.4px;color:#111;line-height:11.76px;top:446.42px;left:229px;transform:scaleX(1.0030);">時間</span>
<span style="font-size:8.4px;color:#111;line-height:11.76px;top:446.42px;left:281.2px;transform:scaleX(0.9851);">取引種別</span>
<span style="font-size:8.4px;color:#111;line-height:11.76px;top:446.42px;left:351.7px;transform:scaleX(0.9731);">数量</span>
<span style="font-size:8.4px;color:#111;line-height:11.76px;top:446.42px;left:407px;transform:scaleX(1.0714);">通貨<i style="transform:scaleX(0.7);margin-right:-5.04px">ペア</i></span>
<span style="font-size:8.4px;color:#111;line-height:11.76px;top:446.42px;left:497.2px;transform:scaleX(0.9433);">価格</span>
<span style="font-size:8.4px;color:#111;line-height:11.76px;top:446.42px;left:531.5px;transform:scaleX(0.9828);">決済逆指値(S/L)</span>
<span style="font-size:8.4px;color:#111;line-height:11.76px;top:446.42px;left:616px;transform:scaleX(0.9825);">決済指値(T/P)</span>
<span style="font-size:8.4px;color:#111;line-height:11.76px;top:446.42px;left:728px;transform:scaleX(0.9552);">価格</span>
<span style="font-size:8.4px;color:#111;line-height:11.76px;top:446.42px;left:796px;transform:scaleX(0.9751);">手数料</span>
<span style="font-size:8.4px;color:#111;line-height:11.76px;top:446.42px;left:873px;transform:scaleX(1.0674);"><i style="transform:scaleX(0.7);margin-right:-10.08px">スワップ</i></span>
<span style="font-size:8.4px;color:#111;line-height:11.76px;top:446.42px;left:1000px;transform:scaleX(0.9254);">損益</span>
<span style="font-size:8.4px;color:#111;line-height:11.76px;top:461.62px;left:170.46px;transform-origin:100% 50%;transform:scaleX(0.91);">2026.01.09 23:01:16</span>
<span style="font-size:8.4px;color:#111;line-height:11.76px;top:461.62px;left:303.22px;transform-origin:100% 50%;transform:scaleX(0.95);">sell</span>
<span style="font-size:8.4px;color:#111;line-height:11.76px;top:461.62px;left:353.19px;transform-origin:100% 50%;transform:scaleX(0.91);">0.23</span>
<span style="font-size:8.4px;color:#111;line-height:11.76px;top:461.62px;left:422.46px;transform-origin:100% 50%;transform:scaleX(0.95);">gold</span>
<span style="font-size:8.4px;color:#111;line-height:11.76px;top:461.62px;left:485.22px;transform-origin:100% 50%;transform:scaleX(0.91);">4505.90</span>
<span style="font-size:8.4px;color:#111;line-height:11.76px;top:461.62px;left:575.99px;transform-origin:100% 50%;transform:scaleX(0.91);">0.00</span>
<span style="font-size:8.4px;color:#111;line-height:11.76px;top:461.62px;left:652.69px;transform-origin:100% 50%;transform:scaleX(0.91);">0.00</span>
<span style="font-size:8.4px;color:#111;line-height:11.76px;top:461.62px;left:715.22px;transform-origin:100% 50%;transform:scaleX(0.91);">4508.91</span>
<span style="font-size:8.4px;color:#111;line-height:11.76px;top:461.62px;left:817.83px;transform-origin:100% 50%;transform:scaleX(0.91);">0</span>
<span style="font-size:8.4px;color:#111;line-height:11.76px;top:461.62px;left:894.63px;transform-origin:100% 50%;transform:scaleX(0.91);">0</span>
<span style="font-size:8.4px;color:#111;line-height:11.76px;top:461.62px;left:975.09px;transform-origin:100% 50%;transform:scaleX(0.91);">-10 930</span>
<span style="font-size:8.4px;color:#111;line-height:11.76px;top:475.62px;left:170.46px;transform-origin:100% 50%;transform:scaleX(0.91);">2026.01.09 23:13:12</span>
<span style="font-size:8.4px;color:#111;line-height:11.76px;top:475.62px;left:303.22px;transform-origin:100% 50%;transform:scaleX(0.95);">sell</span>
<span style="font-size:8.4px;color:#111;line-height:11.76px;top:475.62px;left:353.19px;transform-origin:100% 50%;transform:scaleX(0.91);">0.34</span>
<span style="font-size:8.4px;color:#111;line-height:11.76px;top:475.62px;left:422.46px;transform-origin:100% 50%;transform:scaleX(0.95);">gold</span>
<span style="font-size:8.4px;color:#111;line-height:11.76px;top:475.62px;left:485.22px;transform-origin:100% 50%;transform:scaleX(0.91);">4507.37</span>
<span style="font-size:8.4px;color:#111;line-height:11.76px;top:475.62px;left:575.99px;transform-origin:100% 50%;transform:scaleX(0.91);">0.00</span>
<span style="font-size:8.4px;color:#111;line-height:11.76px;top:475.62px;left:652.69px;transform-origin:100% 50%;transform:scaleX(0.91);">0.00</span>
<span style="font-size:8.4px;color:#111;line-height:11.76px;top:475.62px;left:715.22px;transform-origin:100% 50%;transform:scaleX(0.91);">4508.91</span>
<span style="font-size:8.4px;color:#111;line-height:11.76px;top:475.62px;left:817.83px;transform-origin:100% 50%;transform:scaleX(0.91);">0</span>
<span style="font-size:8.4px;color:#111;line-height:11.76px;top:475.62px;left:894.63px;transform-origin:100% 50%;transform:scaleX(0.91);">0</span>
<span style="font-size:8.4px;color:#111;line-height:11.76px;top:475.62px;left:979.75px;transform-origin:100% 50%;transform:scaleX(0.91);">-8 267</span>
<span style="font-size:8.4px;color:#111;line-height:11.76px;top:489.62px;left:170.46px;transform-origin:100% 50%;transform:scaleX(0.91);">2026.01.09 23:19:44</span>
<span style="font-size:8.4px;color:#111;line-height:11.76px;top:489.62px;left:303.22px;transform-origin:100% 50%;transform:scaleX(0.95);">sell</span>
<span style="font-size:8.4px;color:#111;line-height:11.76px;top:489.62px;left:353.19px;transform-origin:100% 50%;transform:scaleX(0.91);">0.52</span>
<span style="font-size:8.4px;color:#111;line-height:11.76px;top:489.62px;left:422.46px;transform-origin:100% 50%;transform:scaleX(0.95);">gold</span>
<span style="font-size:8.4px;color:#111;line-height:11.76px;top:489.62px;left:485.22px;transform-origin:100% 50%;transform:scaleX(0.91);">4509.00</span>
<span style="font-size:8.4px;color:#111;line-height:11.76px;top:489.62px;left:575.99px;transform-origin:100% 50%;transform:scaleX(0.91);">0.00</span>
<span style="font-size:8.4px;color:#111;line-height:11.76px;top:489.62px;left:652.69px;transform-origin:100% 50%;transform:scaleX(0.91);">0.00</span>
<span style="font-size:8.4px;color:#111;line-height:11.76px;top:489.62px;left:715.22px;transform-origin:100% 50%;transform:scaleX(0.91);">4508.91</span>
<span style="font-size:8.4px;color:#111;line-height:11.76px;top:489.62px;left:817.83px;transform-origin:100% 50%;transform:scaleX(0.91);">0</span>
<span style="font-size:8.4px;color:#111;line-height:11.76px;top:489.62px;left:894.63px;transform-origin:100% 50%;transform:scaleX(0.91);">0</span>
<span style="font-size:8.4px;color:#111;line-height:11.76px;top:489.62px;left:989.52px;transform-origin:100% 50%;transform:scaleX(0.91);">739</span>
<span style="font-size:8.4px;color:#111;line-height:11.76px;top:503.62px;left:170.46px;transform-origin:100% 50%;transform:scaleX(0.91);">2026.01.09 23:22:27</span>
<span style="font-size:8.4px;color:#111;line-height:11.76px;top:503.62px;left:302.28px;transform-origin:100% 50%;transform:scaleX(0.95);">buy</span>
<span style="font-size:8.4px;color:#111;line-height:11.76px;top:503.62px;left:353.19px;transform-origin:100% 50%;transform:scaleX(0.91);">0.23</span>
<span style="font-size:8.4px;color:#111;line-height:11.76px;top:503.62px;left:422.46px;transform-origin:100% 50%;transform:scaleX(0.95);">gold</span>
<span style="font-size:8.4px;color:#111;line-height:11.76px;top:503.62px;left:485.22px;transform-origin:100% 50%;transform:scaleX(0.91);">4510.72</span>
<span style="font-size:8.4px;color:#111;line-height:11.76px;top:503.62px;left:575.99px;transform-origin:100% 50%;transform:scaleX(0.91);">0.00</span>
<span style="font-size:8.4px;color:#111;line-height:11.76px;top:503.62px;left:652.69px;transform-origin:100% 50%;transform:scaleX(0.91);">0.00</span>
<span style="font-size:8.4px;color:#111;line-height:11.76px;top:503.62px;left:715.22px;transform-origin:100% 50%;transform:scaleX(0.91);">4508.47</span>
<span style="font-size:8.4px;color:#111;line-height:11.76px;top:503.62px;left:817.83px;transform-origin:100% 50%;transform:scaleX(0.91);">0</span>
<span style="font-size:8.4px;color:#111;line-height:11.76px;top:503.62px;left:894.63px;transform-origin:100% 50%;transform:scaleX(0.91);">0</span>
<span style="font-size:8.4px;color:#111;line-height:11.76px;top:503.62px;left:979.75px;transform-origin:100% 50%;transform:scaleX(0.91);">-8 171</span>
<span style="font-size:8.4px;color:#111;line-height:11.76px;top:517.62px;left:170.46px;transform-origin:100% 50%;transform:scaleX(0.91);">2026.01.09 23:30:27</span>
<span style="font-size:8.4px;color:#111;line-height:11.76px;top:517.62px;left:302.28px;transform-origin:100% 50%;transform:scaleX(0.95);">buy</span>
<span style="font-size:8.4px;color:#111;line-height:11.76px;top:517.62px;left:353.19px;transform-origin:100% 50%;transform:scaleX(0.91);">0.34</span>
<span style="font-size:8.4px;color:#111;line-height:11.76px;top:517.62px;left:422.46px;transform-origin:100% 50%;transform:scaleX(0.95);">gold</span>
<span style="font-size:8.4px;color:#111;line-height:11.76px;top:517.62px;left:485.22px;transform-origin:100% 50%;transform:scaleX(0.91);">4509.10</span>
<span style="font-size:8.4px;color:#111;line-height:11.76px;top:517.62px;left:575.99px;transform-origin:100% 50%;transform:scaleX(0.91);">0.00</span>
<span style="font-size:8.4px;color:#111;line-height:11.76px;top:517.62px;left:652.69px;transform-origin:100% 50%;transform:scaleX(0.91);">0.00</span>
<span style="font-size:8.4px;color:#111;line-height:11.76px;top:517.62px;left:715.22px;transform-origin:100% 50%;transform:scaleX(0.91);">4508.47</span>
<span style="font-size:8.4px;color:#111;line-height:11.76px;top:517.62px;left:817.83px;transform-origin:100% 50%;transform:scaleX(0.91);">0</span>
<span style="font-size:8.4px;color:#111;line-height:11.76px;top:517.62px;left:894.63px;transform-origin:100% 50%;transform:scaleX(0.91);">0</span>
<span style="font-size:8.4px;color:#111;line-height:11.76px;top:517.62px;left:979.75px;transform-origin:100% 50%;transform:scaleX(0.91);">-3 382</span>
<span style="font-size:8.4px;color:#000;line-height:11.76px;top:531.62px;font-weight:700;left:28px;transform:scaleX(0.9832);">残高: 6 996 450 JPY  有効証拠金: 6 966 439  必要証拠金: 37 017  余剰証拠金: 6 929 422  証拠金維持率: 18819.57%</span>
<span style="font-size:8.4px;color:#000;line-height:11.76px;top:531.62px;font-weight:700;left:976.7px;transform:scaleX(0.9409);">-30 011</span>
<span style="font-size:8.4px;color:#000;line-height:11.76px;top:592.82px;left:21.2px;transform:scaleX(0.9015);">取引</span>
<span style="font-size:8.4px;color:#666;line-height:11.76px;top:592.82px;left:52px;transform:scaleX(0.9851);">運用比率</span>
<span style="font-size:8.4px;color:#666;line-height:11.76px;top:592.82px;left:100px;transform:scaleX(0.9701);">口座履歴</span>
<span style="font-size:8.4px;color:#666;line-height:11.76px;top:592.82px;left:147.5px;transform:scaleX(1.0341);"><i style="transform:scaleX(0.7);margin-right:-10.08px">ニュース</i></span>
<span style="font-size:8.4px;color:#666;line-height:11.76px;top:592.82px;left:185.5px;transform:scaleX(1.0020);"><i style="transform:scaleX(0.7);margin-right:-10.08px">アラーム</i>設定</span>
<span style="font-size:8.4px;color:#666;line-height:11.76px;top:592.82px;left:240px;transform:scaleX(1.0748);"><i style="transform:scaleX(0.7);margin-right:-17.64px">メールボックス</i></span>
<span style="font-size:8.4px;color:#666;line-height:11.76px;top:592.82px;left:303px;transform:scaleX(1.0075);"><i style="transform:scaleX(0.7);margin-right:-12.6px">マーケット</i></span>
<span style="font-size:8.4px;color:#666;line-height:11.76px;top:592.82px;left:358.2px;transform:scaleX(0.9552);">記事</span>
<span style="font-size:8.4px;color:#666;line-height:11.76px;top:592.82px;left:393px;transform:scaleX(1.0075);"><i style="transform:scaleX(0.7);margin-right:-12.6px">ライブラリ</i></span>
<span style="font-size:8.4px;color:#666;line-height:11.76px;top:592.82px;left:436.7px;transform:scaleX(1.0490);"><i style="transform:scaleX(0.7);margin-right:-15.12px">エキスパート</i></span>
<span style="font-size:8.4px;color:#666;line-height:11.76px;top:592.82px;left:488.7px;transform:scaleX(0.9731);">操作履歴</span>
<span style="font-size:6.8px;color:#e02020;line-height:9.52px;top:597.14px;font-weight:700;left:285.6px;transform:scaleX(0.8198);">7</span>
<span style="font-size:6.8px;color:#e02020;line-height:9.52px;top:597.14px;font-weight:700;left:333.8px;transform:scaleX(0.8287);">105</span>
<span style="font-size:6.8px;color:#e02020;line-height:9.52px;top:597.14px;font-weight:700;left:376.2px;transform:scaleX(0.5554);">1</span>
<span style="font-size:8.4px;color:#000;line-height:11.76px;top:613.32px;left:2.5px;transform:scaleX(1.0779);">F1<i style="transform:scaleX(0.7);margin-right:-17.64px">キーでヘルプが</i>表示<i style="transform:scaleX(0.7);margin-right:-10.08px">されます</i></span>
<span style="font-size:8.4px;color:#000;line-height:11.76px;top:613.32px;left:526.7px;transform:scaleX(1.0171);">Default</span>
<span style="font-size:8.4px;color:#000;line-height:11.76px;top:613.32px;left:943px;transform:scaleX(0.9433);">-2079955/6281 kb</span>
</div></body></html>
